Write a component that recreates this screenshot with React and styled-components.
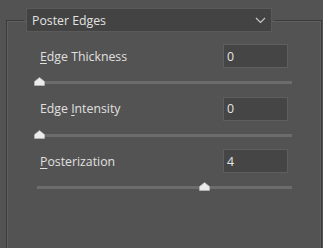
import React from "react";
import styled, { createGlobalStyle } from "styled-components";

const Global = createGlobalStyle`
  html, body { margin: 0; padding: 0; background: #535353; }
  body { width: 323px; height: 248px; overflow: hidden; font-family: "Open Sans", "Noto Sans", sans-serif; }
`;

const Page = styled.div`
  width: 323px;
  height: 248px;
  background: #535353;
  padding-top: 8px;
  box-sizing: border-box;
  overflow: hidden;
`;

const Group = styled.fieldset`
  margin: 0 1px 0 6px;
  padding: 0;
  height: 270px;
  border: 0;
  border-top: 1px solid #3b3b3b;
  border-left: 1px solid #3b3b3b;
  border-right: 1px solid #3b3b3b;
  box-shadow: inset 1px 1px 0 #5f5f5f, inset -1px 0 0 #5f5f5f;
  min-width: 0;
`;

const Legend = styled.legend`
  margin-left: 17px;
  padding: 0 2px;
`;

const Dropdown = styled.div`
  width: 246px;
  height: 24px;
  box-sizing: border-box;
  background: #434343;
  border: 1px solid #5a5a5a;
  display: flex;
  align-items: center;
  justify-content: space-between;
  padding: 0 5px 0 5px;
  color: #e2e2e2;
  font-size: 12.3px;
`;

const Rows = styled.div`
  margin: 12px 0 0 30px;
  width: 255px;
  display: flex;
  flex-direction: column;
`;

const Row = styled.div`
  display: flex;
  flex-direction: column;
  height: 52.5px;
`;

const Header = styled.div`
  display: flex;
  align-items: center;
  justify-content: space-between;
  height: 24px;
  padding: 0 4px 0 3px;
`;

const Label = styled.span`
  color: #e0e0e0;
  font-size: 12.3px;
  u { text-decoration: underline; text-underline-offset: 2px; text-decoration-thickness: 1px; }
`;

const NumberBox = styled.div`
  width: 65px;
  height: 24px;
  box-sizing: border-box;
  background: #454545;
  border: 1px solid #5e5e5e;
  color: #e6e6e6;
  font-size: 12.3px;
  display: flex;
  align-items: center;
  padding-left: 3px;
`;

const Slider = styled.div`
  position: relative;
  height: 28.5px;
`;

const Track = styled.div`
  position: absolute;
  left: 0;
  right: 0;
  top: 13px;
  height: 3px;
  background: #6c6c6c;
`;

const Thumb = styled.svg`
  position: absolute;
  top: 9px;
  width: 11px;
  height: 9px;
`;

const sliders = [
  { pre: "", u: "E", post: "dge Thickness", value: 0, max: 10 },
  { pre: "Edge ", u: "I", post: "ntensity", value: 0, max: 10 },
  { pre: "", u: "P", post: "osterization", value: 4, max: 6 },
];

export default function App() {
  return (
    <Page>
      <Global />
      <Group>
        <Legend>
          <Dropdown>
            <span>Poster Edges</span>
            <svg width="11" height="7" viewBox="0 0 11 7">
              <path d="M1 1 L5.5 5.5 L10 1" fill="none" stroke="#c8c8c8" strokeWidth="1.2" />
            </svg>
          </Dropdown>
        </Legend>
        <Rows>
          {sliders.map((s, i) => (
            <Row key={i}>
              <Header>
                <Label>
                  {s.pre}
                  <u>{s.u}</u>
                  {s.post}
                </Label>
                <NumberBox>{s.value}</NumberBox>
              </Header>
              <Slider>
                <Track />
                <Thumb
                  viewBox="0 0 11 9"
                  style={{ left: `${-3 + (s.value / s.max) * 247.5}px` }}
                >
                  <path d="M0.5 8.5 L0.5 4.5 L5.5 0.5 L10.5 4.5 L10.5 8.5 Z" fill="#ececec" stroke="#bdbdbd" strokeWidth="0.6" />
                </Thumb>
              </Slider>
            </Row>
          ))}
        </Rows>
      </Group>
    </Page>
  );
}
